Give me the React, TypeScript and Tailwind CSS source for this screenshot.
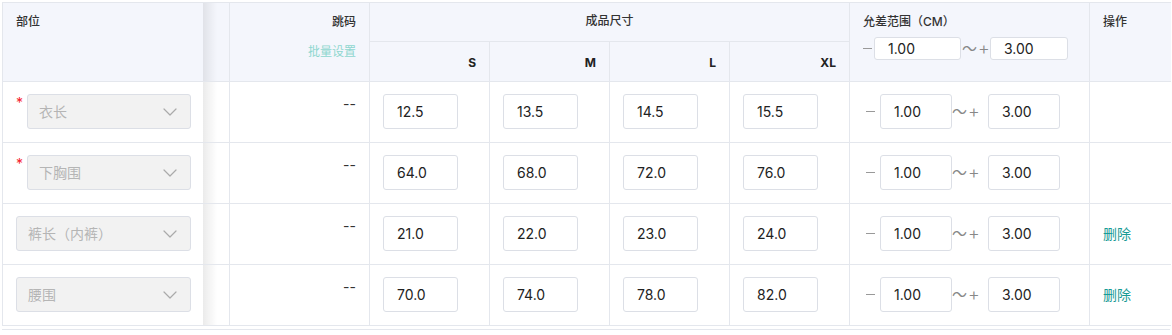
import { ChevronDown } from "lucide-react";

const sizes = ["S", "M", "L", "XL"];

const rows = [
  { part: "衣长", required: true, values: ["12.5", "13.5", "14.5", "15.5"], removable: false },
  { part: "下胸围", required: true, values: ["64.0", "68.0", "72.0", "76.0"], removable: false },
  { part: "裤长（内裤）", required: false, values: ["21.0", "22.0", "23.0", "24.0"], removable: true },
  { part: "腰围", required: false, values: ["70.0", "74.0", "78.0", "82.0"], removable: true },
];

const font = { fontFamily: "Inter, 'Noto Sans CJK SC', sans-serif" };

const Shadow = () => (
  <div className="pointer-events-none absolute top-0 bottom-0 -right-[14px] w-[14px] bg-gradient-to-r from-black/[0.08] to-transparent" />
);

const ValueBox = ({ value, w = "w-[75px]", h = "h-[35px]" }: { value: string; w?: string; h?: string }) => (
  <div className={`${w} ${h} flex items-center rounded-[3px] border border-[#dcdfe6] bg-white pl-[13px] text-[14px] text-[#222]`}>
    {value}
  </div>
);

const Minus = ({ w }: { w: string }) => (
  <span className={`${w} flex items-center`}>
    <span className="h-[1.5px] w-[9px] bg-[#999]" />
  </span>
);

const Tilde = ({ w }: { w: string }) => (
  <span className={`${w} flex items-center text-[#888]`}>
    <span className="text-[15px]" style={{ fontFamily: "'Noto Sans CJK SC', sans-serif" }}>〜</span>
    <span className="ml-[1px] text-[18px] font-light leading-none">+</span>
  </span>
);

const Tolerance = () => (
  <div className="flex items-center">
    <span className="w-[3px]" />
    <Minus w="w-[14px]" />
    <ValueBox value="1.00" w="w-[72px]" />
    <Tilde w="w-[36px]" />
    <ValueBox value="3.00" w="w-[72px]" />
  </div>
);

export default function App() {
  return (
    <div className="min-h-[335px] bg-white pt-[2px] pl-[2px]" style={font}>
      <table className="table-fixed border-collapse text-[12px] text-[#333]">
        <colgroup>
          <col className="w-[200px]" />
          <col className="w-[27px]" />
          <col className="w-[140px]" />
          <col className="w-[120px]" />
          <col className="w-[120px]" />
          <col className="w-[120px]" />
          <col className="w-[120px]" />
          <col className="w-[240px]" />
          <col className="w-[81px]" />
        </colgroup>
        <thead className="bg-[#f4f6fc]">
          <tr className="h-[39px]">
            <th rowSpan={2} className="relative border border-[#e4e7ed] border-r-0 px-[13px] pt-[10px] text-left align-top font-medium">
              部位
              <Shadow />
            </th>
            <th rowSpan={2} className="border border-[#e4e7ed] border-l-0" />
            <th rowSpan={2} className="border border-[#e4e7ed] px-[13px] pt-[10px] text-right align-top font-medium">
              <div>跳码</div>
              <div className="mt-[12px] text-[#8fd6cf] font-normal">批量设置</div>
            </th>
            <th colSpan={4} className="border border-[#e4e7ed] pb-[3px] text-center font-medium">
              成品尺寸
            </th>
            <th rowSpan={2} className="border border-[#e4e7ed] px-[13px] pt-[10px] text-left align-top font-medium">
              <div>允差范围（CM）</div>
              <div className="mt-[6px] flex items-center font-normal">
                <Minus w="w-[11px]" />
                <ValueBox value="1.00" w="w-[87px]" h="h-[23px]" />
                <Tilde w="w-[29px] pl-[1px]" />
                <ValueBox value="3.00" w="w-[78px]" h="h-[23px]" />
              </div>
            </th>
            <th rowSpan={2} className="border border-[#e4e7ed] border-r-0 px-[13px] pt-[10px] text-left align-top font-medium">
              操作
            </th>
          </tr>
          <tr className="h-[40px]">
            {sizes.map((s) => (
              <th key={s} className="border border-[#e4e7ed] px-[13px] pt-[2px] text-right text-[12px] font-bold text-[#222]">
                {s}
              </th>
            ))}
          </tr>
        </thead>
        <tbody>
          {rows.map((r) => (
            <tr key={r.part} className="h-[61px]">
              <td className="relative border border-[#e4e7ed] border-r-0 pl-[13px] pr-[12px] pt-[12px] align-top">
                <div className="flex items-start">
                  {r.required && <span className="w-[11px] pt-[2px] text-[14px] leading-none text-[#f5222d]">*</span>}
                  <div className="flex h-[35px] flex-1 items-center justify-between rounded-[3px] border border-[#dcdfe6] bg-[#f2f2f2] pl-[11px] pr-[8px] text-[14px] text-[#b5b5b5]">
                    <span>{r.part}</span>
                    <ChevronDown className="h-[24px] w-[24px] text-[#aaa]" strokeWidth={1.2} />
                  </div>
                </div>
                <Shadow />
              </td>
              <td className="border border-[#e4e7ed] border-l-0" />
              <td className="border border-[#e4e7ed] px-[13px] pt-[12px] text-right align-top text-[14px] leading-[20px] text-[#333]">
                --
              </td>
              {r.values.map((v, i) => (
                <td key={i} className="border border-[#e4e7ed] px-[13px] pt-[12px] align-top">
                  <ValueBox value={v} />
                </td>
              ))}
              <td className="border border-[#e4e7ed] px-[13px] pt-[12px] align-top">
                <Tolerance />
              </td>
              <td className="border border-[#e4e7ed] border-r-0 px-[13px] pt-[12px] align-top text-[14px] leading-[35px] text-[#1a9b95]">
                {r.removable ? "删除" : ""}
              </td>
            </tr>
          ))}
        </tbody>
      </table>
      <div className="mt-[3px] h-[1px] w-[1168px] bg-[#e4e7ed]" />
    </div>
  );
}
